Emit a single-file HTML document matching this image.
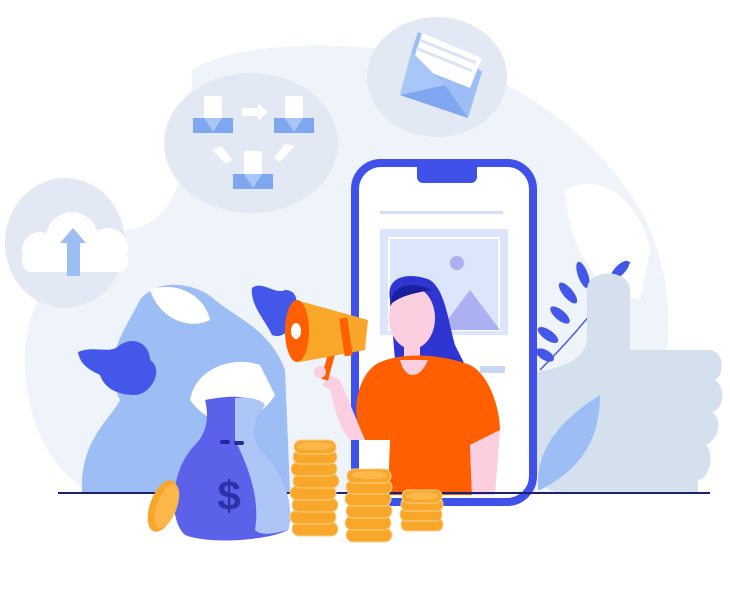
<!DOCTYPE html>
<html><head><meta charset="utf-8"><style>
html,body{margin:0;padding:0;background:#fff;width:730px;height:602px;overflow:hidden}
svg{display:block}
</style></head><body>
<svg width="730" height="602" viewBox="0 0 730 602" xmlns="http://www.w3.org/2000/svg">
<path d="M192 70 C230 45 330 38 420 55 C520 75 600 140 640 210 C680 280 670 360 655 420 C640 470 600 492 560 492 L90 492 C50 470 25 420 25 360 C25 300 60 240 130 230 C185 220 190 150 192 70 Z" fill="#eff3fa"/>
<path d="M565 190 C600 170 640 200 650 250 L640 300 C600 290 570 260 565 190Z" fill="#fff"/>
<ellipse cx="437" cy="77" rx="70" ry="60" fill="#e2e9f4"/>
<ellipse cx="251" cy="143" rx="87" ry="70" fill="#e2e9f4"/>
<ellipse cx="65" cy="243" rx="60" ry="65" fill="#e2e9f4"/>
<!-- envelope -->
<polygon points="418,32 458,48 482,72 468,118 400,95 412,50" fill="#9dbdf5"/>
<polygon points="422,33 482,58 470,88 412,65" fill="#fff"/>
<rect x="418" y="50" width="60" height="3" fill="#dbe4f3" transform="rotate(22 448 52)"/>
<rect x="414" y="58" width="60" height="3" fill="#dbe4f3" transform="rotate(22 444 60)"/>
<polygon points="400,95 445,85 468,118" fill="#7ea7f0"/>
<polygon points="412,52 445,85 400,95" fill="#a9c6f8"/>
<!-- docs -->
<g fill="#fff">
<rect x="204" y="96" width="18" height="24" rx="2"/><rect x="285" y="96" width="18" height="24" rx="2"/><rect x="244" y="151" width="18" height="24" rx="2"/>
<polygon points="242,108 258,108 258,103 268,112 258,121 258,116 242,116"/>
<polygon points="212,150 222,146 232,160 226,164"/><polygon points="295,146 285,144 274,158 280,162"/>
</g>
<g fill="#7ea7f0"><path d="M193 118 h40 v15 h-40z"/><path d="M274 118 h40 v15 h-40z"/><path d="M233 174 h40 v15 h-40z"/></g>
<g fill="#a9c6f8"><polygon points="204,118 222,118 213,132"/><polygon points="285,118 303,118 294,132"/><polygon points="244,174 262,174 253,188"/></g>
<!-- cloud -->
<g fill="#fff"><circle cx="40" cy="250" r="18"/><circle cx="72" cy="238" r="26"/><circle cx="108" cy="248" r="20"/><rect x="22" y="250" width="106" height="22" rx="10"/></g>
<polygon points="73,228 86,243 80,243 80,276 67,276 67,243 60,243" fill="#9dbdf5"/>
<!-- right leaves -->
<path d="M540 370 Q590 320 630 262" stroke="#4357e8" stroke-width="1.5" fill="none"/>
<g fill="#4357e8">
<ellipse cx="583" cy="275" rx="5" ry="14" transform="rotate(-20 583 275)"/>
<ellipse cx="620" cy="270" rx="5" ry="12" transform="rotate(45 620 270)"/>
<ellipse cx="568" cy="293" rx="5" ry="13" transform="rotate(-40 568 293)"/>
<ellipse cx="560" cy="315" rx="5" ry="12" transform="rotate(-50 560 315)"/>
<ellipse cx="548" cy="335" rx="5" ry="12" transform="rotate(-55 548 335)"/>
<ellipse cx="545" cy="355" rx="5" ry="10" transform="rotate(-60 545 355)"/>
</g>
<!-- thumbs up -->
<path d="M587 290 C587 268 630 268 630 290 L630 350 L708 350 C725 350 725 375 715 380 C728 390 722 410 712 412 C724 420 718 440 706 445 C716 455 708 480 698 480 L698 492 L560 492 C545 492 537 480 537 470 L537 372 C560 368 585 360 587 340 Z" fill="#d5e0ef"/>
<path d="M538 490 C535 450 560 420 600 395 C600 440 580 470 540 490Z" fill="#9dbdf5"/>
<!-- left leaves -->
<path d="M82 492 C80 440 110 420 120 400 C100 360 125 330 140 300 C160 275 200 285 215 300 C240 320 270 330 285 370 L290 492Z" fill="#9dbdf5"/>
<path d="M150 290 C175 280 205 295 210 320 C190 330 160 320 150 290Z" fill="#fff"/>
<path d="M190 400 C195 370 230 355 260 365 L275 395 C260 420 220 440 190 400Z" fill="#fff"/>
<path d="M78 352 C95 345 110 355 120 345 C135 335 150 345 150 360 C165 370 150 395 135 395 C120 395 105 390 100 375 C90 370 80 365 78 352Z" fill="#4357e8"/>
<path d="M252 288 C262 280 275 295 285 290 C298 290 300 305 290 312 C295 325 285 340 272 335 C265 320 250 305 252 288Z" fill="#4357e8"/>
<!-- phone -->
<rect x="355" y="163" width="178" height="339" rx="26" fill="#fff" stroke="#3f51e8" stroke-width="8"/>
<path d="M417 160 h60 v17 a6 6 0 0 1 -6 6 h-48 a6 6 0 0 1 -6 -6z" fill="#3f51e8"/>
<rect x="380" y="211" width="123" height="3" fill="#d5e0f5"/>
<rect x="380" y="229" width="128" height="106" fill="#dbe6fb"/>
<rect x="389" y="238" width="110" height="92" fill="none" stroke="#fff" stroke-width="2"/>
<polygon points="440,330 470,290 500,330" fill="#aab0f2"/>
<circle cx="457" cy="263" r="7" fill="#aab0f2"/>
<rect x="480" y="366" width="25" height="7" fill="#c8d7f6"/>
<!-- woman -->
<path d="M390 300 C385 275 410 272 430 280 C445 290 448 320 455 345 L465 365 L395 360Z" fill="#2f35d0"/>
<ellipse cx="412" cy="318" rx="23" ry="31" fill="#fbcfe0"/>
<path d="M390 305 C392 285 410 280 432 290 C420 292 400 295 390 305Z" fill="#1a1fa0"/>
<rect x="404" y="340" width="16" height="22" fill="#fbcfe0"/>
<path d="M375 365 C390 355 430 350 470 365 C490 375 500 410 500 430 L470 445 L472 495 L388 495 L390 440 L365 440 C350 420 355 380 375 365Z" fill="#ff5f00"/>
<path d="M400 360 C405 380 420 380 428 360Z" fill="#fbcfe0"/>
<path d="M470 445 L500 430 L495 495 L472 495Z" fill="#fbcfe0"/>
<path d="M350 440 C340 430 335 410 330 390 L322 385 L330 375 L340 380 L365 440Z" fill="#fbcfe0"/>
<!-- megaphone -->
<rect x="325" y="350" width="7" height="30" fill="#ff5f00" transform="rotate(15 328 365)"/>
<polygon points="296,300 368,320 365,350 300,362" fill="#f9a72b"/>
<rect x="342" y="318" width="8" height="38" fill="#ff5f00" transform="rotate(-8 346 337)"/>
<ellipse cx="297" cy="331" rx="12" ry="31" fill="#ff5f00"/>
<ellipse cx="296" cy="331" rx="5" ry="8" fill="#fff"/>
<circle cx="320" cy="372" r="6" fill="#fbcfe0"/>
<!-- ground -->
<rect x="58" y="492" width="652" height="2" fill="#1a2270"/>
<!-- money bag -->
<path d="M205 400 C230 395 250 395 265 405 C255 420 250 432 260 450 C285 470 295 510 288 530 C270 540 210 545 185 535 C168 520 170 470 195 445 C205 435 210 420 205 400Z" fill="#5b61e8"/>
<path d="M235 398 C250 396 262 400 265 405 C255 420 250 432 260 450 C285 470 295 510 288 530 C270 535 260 535 255 530 C260 500 250 470 235 440Z" fill="#aec6f6"/>
<rect x="220" y="440" width="10" height="4" rx="2" fill="#27299a"/><rect x="234" y="441" width="10" height="4" rx="2" fill="#27299a"/>
<text x="229" y="510" font-family="Liberation Sans, sans-serif" font-weight="bold" font-size="42" fill="#2c33a8" text-anchor="middle">$</text>
<ellipse cx="163" cy="506" rx="13" ry="27" fill="#f9a72b" transform="rotate(20 163 506)"/>
<ellipse cx="167" cy="506" rx="10" ry="23" fill="#fbb74a" transform="rotate(20 167 506)"/>
<!-- coin stacks -->
<g fill="#f9a72b" stroke="#f6d08a" stroke-width="1">
<rect x="292" y="522" width="46" height="14" rx="7"/><rect x="290" y="510" width="46" height="14" rx="7"/><rect x="292" y="498" width="46" height="14" rx="7"/><rect x="290" y="486" width="46" height="14" rx="7"/><rect x="293" y="474" width="46" height="14" rx="7"/><rect x="291" y="462" width="46" height="14" rx="7"/><rect x="293" y="450" width="44" height="14" rx="7"/><rect x="294" y="440" width="42" height="14" rx="7"/>
<rect x="346" y="528" width="46" height="14" rx="7"/><rect x="345" y="516" width="46" height="14" rx="7"/><rect x="346" y="504" width="46" height="14" rx="7"/><rect x="345" y="492" width="46" height="14" rx="7"/><rect x="346" y="480" width="46" height="14" rx="7"/><rect x="347" y="469" width="44" height="14" rx="7"/>
<rect x="401" y="518" width="42" height="13" rx="6"/><rect x="400" y="508" width="42" height="13" rx="6"/><rect x="401" y="498" width="42" height="13" rx="6"/><rect x="402" y="490" width="40" height="13" rx="6"/>
</g>
<g fill="#fbb74a"><ellipse cx="315" cy="446" rx="18" ry="4"/><ellipse cx="369" cy="475" rx="18" ry="4"/><ellipse cx="422" cy="496" rx="16" ry="4"/></g>
</svg>
</body></html>
